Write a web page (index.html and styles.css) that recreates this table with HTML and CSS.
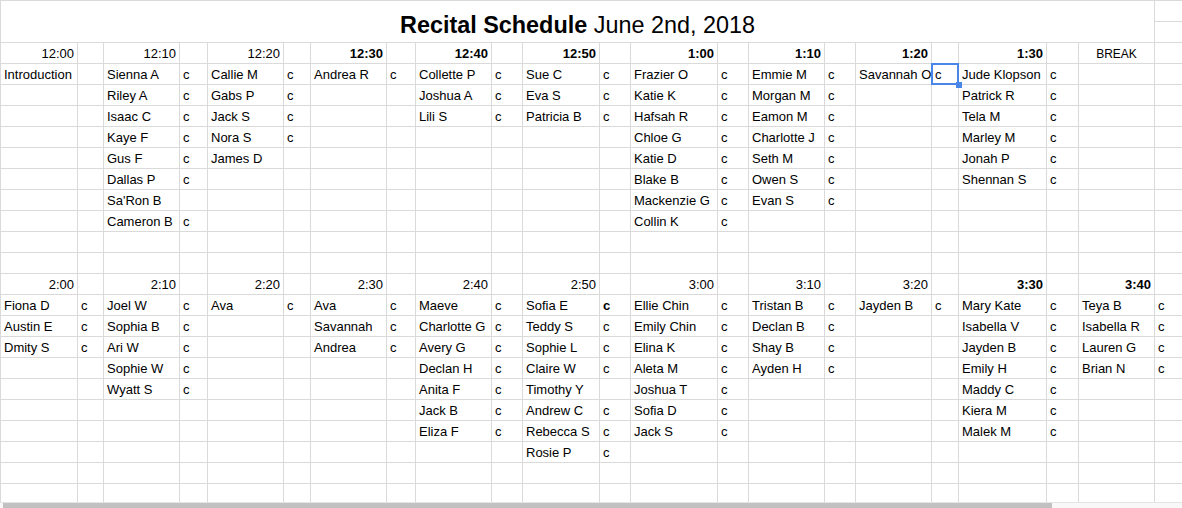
FILE: index.html
```html
<!DOCTYPE html>
<html lang="en">
<head>
<meta charset="utf-8">
<title>Recital Schedule</title>
<link rel="stylesheet" href="styles.css">
</head>
<body>
<div class="sheet">
<div class="grid">
<span class="title"><b>Recital Schedule</b>&nbsp;June 2nd, 2018</span><span></span>
<span></span>
<span class="r">12:00</span><span></span><span class="r">12:10</span><span></span><span class="r">12:20</span><span></span><span class="r b">12:30</span><span></span><span class="r b">12:40</span><span></span><span class="r b">12:50</span><span></span><span class="r b">1:00</span><span></span><span class="r b">1:10</span><span></span><span class="r b">1:20</span><span></span><span class="r b">1:30</span><span></span><span class="ctr">BREAK</span><span></span>
<span>Introduction</span><span></span><span>Sienna A</span><span>c</span><span>Callie M</span><span>c</span><span>Andrea R</span><span>c</span><span>Collette P</span><span>c</span><span>Sue C</span><span>c</span><span>Frazier O</span><span>c</span><span>Emmie M</span><span>c</span><span>Savannah O</span><span class="sel">c</span><span>Jude Klopson</span><span>c</span><span></span><span></span>
<span></span><span></span><span>Riley A</span><span>c</span><span>Gabs P</span><span>c</span><span></span><span></span><span>Joshua A</span><span>c</span><span>Eva S</span><span>c</span><span>Katie K</span><span>c</span><span>Morgan M</span><span>c</span><span></span><span></span><span>Patrick R</span><span>c</span><span></span><span></span>
<span></span><span></span><span>Isaac C</span><span>c</span><span>Jack S</span><span>c</span><span></span><span></span><span>Lili S</span><span>c</span><span>Patricia B</span><span>c</span><span>Hafsah R</span><span>c</span><span>Eamon M</span><span>c</span><span></span><span></span><span>Tela M</span><span>c</span><span></span><span></span>
<span></span><span></span><span>Kaye F</span><span>c</span><span>Nora S</span><span>c</span><span></span><span></span><span></span><span></span><span></span><span></span><span>Chloe G</span><span>c</span><span>Charlotte J</span><span>c</span><span></span><span></span><span>Marley M</span><span>c</span><span></span><span></span>
<span></span><span></span><span>Gus F</span><span>c</span><span>James D</span><span></span><span></span><span></span><span></span><span></span><span></span><span></span><span>Katie D</span><span>c</span><span>Seth M</span><span>c</span><span></span><span></span><span>Jonah P</span><span>c</span><span></span><span></span>
<span></span><span></span><span>Dallas P</span><span>c</span><span></span><span></span><span></span><span></span><span></span><span></span><span></span><span></span><span>Blake B</span><span>c</span><span>Owen S</span><span>c</span><span></span><span></span><span>Shennan S</span><span>c</span><span></span><span></span>
<span></span><span></span><span>Sa'Ron B</span><span></span><span></span><span></span><span></span><span></span><span></span><span></span><span></span><span></span><span>Mackenzie G</span><span>c</span><span>Evan S</span><span>c</span><span></span><span></span><span></span><span></span><span></span><span></span>
<span></span><span></span><span>Cameron B</span><span>c</span><span></span><span></span><span></span><span></span><span></span><span></span><span></span><span></span><span>Collin K</span><span>c</span><span></span><span></span><span></span><span></span><span></span><span></span><span></span><span></span>
<span></span><span></span><span></span><span></span><span></span><span></span><span></span><span></span><span></span><span></span><span></span><span></span><span></span><span></span><span></span><span></span><span></span><span></span><span></span><span></span><span></span><span></span>
<span></span><span></span><span></span><span></span><span></span><span></span><span></span><span></span><span></span><span></span><span></span><span></span><span></span><span></span><span></span><span></span><span></span><span></span><span></span><span></span><span></span><span></span>
<span class="r">2:00</span><span></span><span class="r">2:10</span><span></span><span class="r">2:20</span><span></span><span class="r">2:30</span><span></span><span class="r">2:40</span><span></span><span class="r">2:50</span><span></span><span class="r">3:00</span><span></span><span class="r">3:10</span><span></span><span class="r">3:20</span><span></span><span class="r b">3:30</span><span></span><span class="r b">3:40</span><span></span>
<span>Fiona D</span><span>c</span><span>Joel W</span><span>c</span><span>Ava</span><span>c</span><span>Ava</span><span>c</span><span>Maeve</span><span>c</span><span>Sofia E</span><span class="b">c</span><span>Ellie Chin</span><span>c</span><span>Tristan B</span><span>c</span><span>Jayden B</span><span>c</span><span>Mary Kate</span><span>c</span><span>Teya B</span><span>c</span>
<span>Austin E</span><span>c</span><span>Sophia B</span><span>c</span><span></span><span></span><span>Savannah</span><span>c</span><span>Charlotte G</span><span>c</span><span>Teddy S</span><span>c</span><span>Emily Chin</span><span>c</span><span>Declan B</span><span>c</span><span></span><span></span><span>Isabella V</span><span>c</span><span>Isabella R</span><span>c</span>
<span>Dmity S</span><span>c</span><span>Ari W</span><span>c</span><span></span><span></span><span>Andrea</span><span>c</span><span>Avery G</span><span>c</span><span>Sophie L</span><span>c</span><span>Elina K</span><span>c</span><span>Shay B</span><span>c</span><span></span><span></span><span>Jayden B</span><span>c</span><span>Lauren G</span><span>c</span>
<span></span><span></span><span>Sophie W</span><span>c</span><span></span><span></span><span></span><span></span><span>Declan H</span><span>c</span><span>Claire W</span><span>c</span><span>Aleta M</span><span>c</span><span>Ayden H</span><span>c</span><span></span><span></span><span>Emily H</span><span>c</span><span>Brian N</span><span>c</span>
<span></span><span></span><span>Wyatt S</span><span>c</span><span></span><span></span><span></span><span></span><span>Anita F</span><span>c</span><span>Timothy Y</span><span></span><span>Joshua T</span><span>c</span><span></span><span></span><span></span><span></span><span>Maddy C</span><span>c</span><span></span><span></span>
<span></span><span></span><span></span><span></span><span></span><span></span><span></span><span></span><span>Jack B</span><span>c</span><span>Andrew C</span><span>c</span><span>Sofia D</span><span>c</span><span></span><span></span><span></span><span></span><span>Kiera M</span><span>c</span><span></span><span></span>
<span></span><span></span><span></span><span></span><span></span><span></span><span></span><span></span><span>Eliza F</span><span>c</span><span>Rebecca S</span><span>c</span><span>Jack S</span><span>c</span><span></span><span></span><span></span><span></span><span>Malek M</span><span>c</span><span></span><span></span>
<span></span><span></span><span></span><span></span><span></span><span></span><span></span><span></span><span></span><span></span><span>Rosie P</span><span>c</span><span></span><span></span><span></span><span></span><span></span><span></span><span></span><span></span><span></span><span></span>
<span></span><span></span><span></span><span></span><span></span><span></span><span></span><span></span><span></span><span></span><span></span><span></span><span></span><span></span><span></span><span></span><span></span><span></span><span></span><span></span><span></span><span></span>
<span></span><span></span><span></span><span></span><span></span><span></span><span></span><span></span><span></span><span></span><span></span><span></span><span></span><span></span><span></span><span></span><span></span><span></span><span></span><span></span><span></span><span></span>
</div>
</div>
<div class="hscroll"><div class="thumb"></div></div>
</body>
</html>
```

FILE: styles.css
```css
html, body {
  margin: 0;
  padding: 0;
  background: #fff;
  overflow: hidden;
}
body {
  width: 1182px;
  height: 508px;
  font-family: "Liberation Sans", Arial, sans-serif;
  font-size: 13px;
  color: #000;
}
.sheet {
  height: 502px;
  overflow: hidden;
}
.grid {
  display: grid;
  grid-template-columns: 76px 25px 75px 27px 75px 26px 75px 28px 75px 30px 76px 30px 86px 30px 75px 30px 75px 26px 87px 31px 75px 60px;
  grid-auto-rows: 20px;
  gap: 1px;
  padding: 1px 0 0 1px;
  background: #dadada;
  width: max-content;
}
.grid > span {
  background: #fff;
  padding: 1px 3px 0;
  line-height: 20px;
  white-space: nowrap;
  overflow: visible;
}
.grid > .title {
  grid-column: 1 / 22;
  grid-row: span 2;
  display: flex;
  align-items: flex-end;
  justify-content: center;
  font-size: 23.4px;
  line-height: 24px;
  padding: 0 0 5px;
}
.r { text-align: right; }
.b { font-weight: bold; }
.grid > .ctr {
  text-align: center;
  font-size: 12px;
}
.grid > .sel {
  position: relative;
}
.sel::after {
  content: "";
  position: absolute;
  left: -1px;
  top: -1px;
  right: -1px;
  bottom: -1px;
  border: 2px solid #4a86e8;
}
.sel::before {
  content: "";
  position: absolute;
  right: -4px;
  bottom: -4px;
  width: 6px;
  height: 6px;
  background: #4a86e8;
  z-index: 1;
}
.hscroll {
  height: 5px;
  border-top: 1px solid #e4e4e4;
  background: #f8f8f8;
  padding-left: 3px;
}
.thumb {
  width: 1049px;
  height: 5px;
  background: #c1c1c1;
}
```
